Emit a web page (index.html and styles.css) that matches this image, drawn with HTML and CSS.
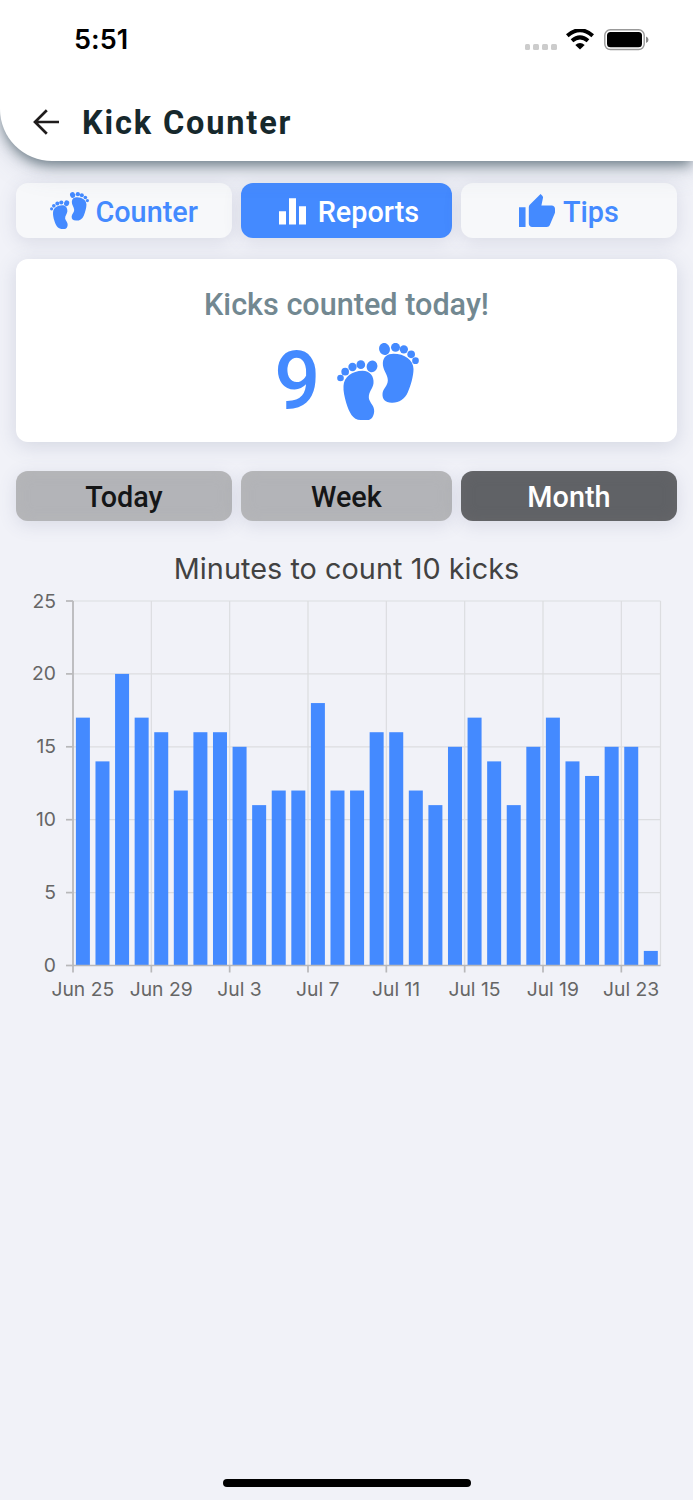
FILE: index.html
```
<!DOCTYPE html>
<html lang="en">
<head>
	<meta charset="UTF-8">
	<title>Kick Counter</title>
	<link rel="stylesheet" href="styles.css">
</head>
<body>
	<!-- shared footprints icon -->
	<svg class="defs" width="0" height="0">
		<symbol id="feet" viewBox="51 39 245 231">
			<path d="M70 168C71 140 96 123 127 122C150 122 162 139 160 160C158 177 145 185 146 204C148 218 164 228 162 245C160 261 153 270 142 270H122C97 270 87 246 78 218C73 201 69 183 70 168Z"/>
			<path d="M188 99C189 80 202 71 220 71C253 71 280 89 280 117C280 138 272 166 263 187C254 208 237 218 217 218C196 219 186 208 187 192C188 175 203 169 203 151C203 132 187 120 188 99Z"/>
			<circle cx="61" cy="144" r="10"/>
			<circle cx="75" cy="125" r="11.500"/>
			<circle cx="97" cy="111" r="12.500"/>
			<circle cx="122" cy="104" r="13"/>
			<ellipse cx="155.500" cy="109" rx="16" ry="18" transform="rotate(18 155.500 109)"/>
			<ellipse cx="193" cy="57" rx="16" ry="18.500" transform="rotate(-18 193 57)"/>
			<circle cx="226" cy="52" r="13.500"/>
			<circle cx="251" cy="58" r="12.500"/>
			<circle cx="273" cy="73" r="11.500"/>
			<circle cx="286" cy="92" r="10"/>
		</symbol>
	</svg>

	<header class="header">
		<div class="status">
			<span class="time">5:51</span>
			<div class="status-icons">
				<div class="dots"><i></i><i></i><i></i><i></i></div>
				<svg class="wifi" width="28" height="21" viewBox="0 0 28 21">
					<path d="M1.300 6.800Q14-4.300 26.700 6.800M6 11.800Q14 5 22 11.800" fill="none" stroke="#000" stroke-width="4"/>
					<path d="M9.300 15.900Q14 12.200 18.700 15.900L14 20.500Z"/>
				</svg>
				<svg class="battery" width="45" height="22" viewBox="0 0 45 22">
					<rect x=".8" y=".8" width="39.400" height="19.700" rx="5.500" fill="none" stroke="#999" stroke-width="1.400"/>
					<rect x="3" y="3" width="35" height="15.300" rx="3.500"/>
					<path d="M42 7.500Q44.500 8.500 44.500 10.700T42 14Z" fill="#888"/>
				</svg>
			</div>
		</div>
		<div class="title-bar">
			<svg class="back" width="27" height="26" viewBox="0 0 27 26">
				<path d="M26 13H2M13.800 1.200L2 13L13.800 24.800" fill="none" stroke="#1f1c1c" stroke-width="2.700"/>
			</svg>
			<h1>Kick Counter</h1>
		</div>
	</header>

	<main>
		<nav class="tabs">
			<a class="tab"><svg class="tab-feet"><use href="#feet"/></svg>Counter</a>
			<a class="tab on">
				<svg class="tab-bars" width="27" height="27" viewBox="0 0 27 27"><path d="M0 13.300H7V26.500H0ZM10 .3H17V26.500H10ZM20 8.300H27V26.500H20Z"/></svg>Reports
			</a>
			<a class="tab">
				<svg class="tab-thumb" width="36" height="33" viewBox="1 1 22 20" preserveAspectRatio="none"><path d="M1 21h4V9H1v12zm22-11c0-1.100-.9-2-2-2h-6.310l.95-4.570.03-.32c0-.41-.17-.79-.44-1.060L14.170 1 7.590 7.590C7.220 7.950 7 8.450 7 9v10c0 1.100.9 2 2 2h9c.83 0 1.540-.5 1.840-1.220l3.020-7.050c.09-.23.14-.47.14-.73v-2z"/></svg>Tips
			</a>
		</nav>

		<section class="card">
			<p class="card-title">Kicks counted today!</p>
			<div class="count">
				<span>9</span>
				<svg class="count-feet"><use href="#feet"/></svg>
			</div>
		</section>

		<nav class="tabs ranges">
			<a class="range">Today</a>
			<a class="range">Week</a>
			<a class="range on">Month</a>
		</nav>

		<h2>Minutes to count 10 kicks</h2>
		<svg id="chart" width="693" height="420" viewBox="0 0 693 420"></svg>
	</main>

	<div class="home-bar"></div>

	<script src="chart.js"></script>
</body>
</html>
```
FILE: styles.css
```
* {
	box-sizing: border-box;
}
body {
	display: flex;
	flex-direction: column;
	height: 1500px;
	margin: 0;
	overflow: hidden;
	background: #f1f2f8;
	font-family: Roboto, sans-serif;
}
svg {
	display: block;
	flex: none;
}
.defs {
	position: absolute;
}

/* header */
.header {
	position: relative;
	height: 160.600px;
	background: #fff;
	border-bottom-left-radius: 52px;
	box-shadow: 0 6px 13px -2px rgba(69,90,100,.75), 0 10px 28px rgba(96,110,140,.18);
}
.status {
	display: flex;
	justify-content: space-between;
	height: 80px;
	padding: 0 44px 0 74px;
}
.time {
	padding-top: 23px;
	font: 600 27px/34px Inter, sans-serif;
	letter-spacing: .1px;
}
.status-icons {
	display: flex;
	padding-top: 29px;
}
.dots {
	display: flex;
	gap: 3px;
	padding-top: 15px;
	margin-right: 9.500px;
}
.dots i {
	width: 5.700px;
	height: 5.500px;
	border-radius: 1.500px;
	background: #ccc;
}
.wifi {
	margin-right: 10px;
}
.title-bar {
	display: flex;
	align-items: center;
	height: 84px;
	padding-left: 32.500px;
}
.back {
	margin-right: 22.500px;
}
h1 {
	margin: 2px 0 0;
	color: #16282c;
	font-size: 32.500px;
	font-weight: 700;
	line-height: 40px;
	letter-spacing: 1.850px;
}

/* tabs */
main {
	flex: 1;
}
.tabs {
	display: grid;
	grid-template-columns: 215.500px 210.500px 215.500px;
	column-gap: 9.500px;
	padding: 22.600px 16.200px 0;
}
.tab,
.range {
	display: flex;
	align-items: center;
	justify-content: center;
	height: 55px;
	border-radius: 12px;
	box-shadow: 0 4px 18px rgba(80,90,125,.15);
	font-size: 28.800px;
	font-weight: 500;
}
.tab {
	padding-top: 3px;
	background: #f7f8fa;
	color: #448aff;
	fill: #448aff;
}
.tab.on {
	padding-left: 5px;
	background: #448aff;
	color: #fff;
	fill: #fff;
}
.tab-feet {
	width: 39px;
	height: 37px;
	margin: 0 6.500px 3px 0;
}
.tab-bars {
	margin: 0 12px 2px 0;
}
.tab-thumb {
	margin: 0 8px 4px 0;
}

/* today card */
.card {
	height: 183px;
	margin: 21px 16.200px 0;
	padding-top: 25.500px;
	border-radius: 12px;
	background: #fff;
	box-shadow: 0 4px 20px rgba(80,90,125,.18);
}
.card-title {
	margin: 0;
	color: #728891;
	font-size: 30.600px;
	font-weight: 500;
	line-height: 40px;
	text-align: center;
}
.count {
	display: flex;
	justify-content: center;
	margin-top: 8.500px;
	color: #448aff;
	fill: #448aff;
}
.count span {
	padding-top: 1px;
	font-size: 81px;
	font-weight: 500;
	line-height: 96px;
}
.count-feet {
	width: 82px;
	height: 77px;
	margin: 10px 0 0 16.500px;
}

/* ranges */
.ranges {
	padding-top: 29px;
}
.range {
	height: 50px;
	padding-top: 2px;
	background: #b3b4b8;
	color: #151617;
	box-shadow: inset 0 0 14px rgba(190,190,185,.35), 0 4px 18px rgba(80,90,125,.15);
}
.range.on {
	background: #606266;
	color: #fff;
	box-shadow: inset 0 0 14px rgba(115,113,113,.35), 0 4px 18px rgba(80,90,125,.15);
}

/* chart */
h2 {
	margin: 27.500px 0 0;
	color: #424242;
	font: 400 28.800px/40px Inter, sans-serif;
	letter-spacing: .05px;
	text-align: center;
}
#chart text {
	fill: #666;
	font: 400 19.300px Inter, sans-serif;
	letter-spacing: 0;
}
.grid {
	stroke: #dcdde0;
	stroke-width: 1.200;
}
.axis {
	stroke: #b8b8ba;
	stroke-width: 1.700;
}
.bar {
	fill: #448aff;
}

.home-bar {
	width: 248px;
	height: 8px;
	margin: 0 auto 13.400px;
	border-radius: 4px;
	background: #000;
}
```
FILE: chart.js
```
var chart = document.getElementById('chart');
var values = [17, 14, 20, 17, 16, 12, 16, 16, 15, 11, 12, 12, 18, 12, 12,
	16, 16, 12, 11, 15, 17, 14, 11, 15, 17, 14, 13, 15, 15, 1];
var days = ['Jun 25', 'Jun 29', 'Jul 3', 'Jul 7', 'Jul 11', 'Jul 15', 'Jul 19', 'Jul 23'];
var left = 73, right = 660.5, top0 = 12, bottom = 376.5;
var step = (right - left) / values.length;
var unit = (bottom - top0) / 25;
var html = '';

function line(cls, x1, y1, x2, y2) {
	html += '<line class="' + cls + '" x1="' + x1 + '" y1="' + y1 + '" x2="' + x2 + '" y2="' + y2 + '"/>';
}
function text(str, x, y, anchor) {
	html += '<text x="' + x + '" y="' + y + '" text-anchor="' + anchor + '">' + str + '</text>';
}

// horizontal grid and y labels
for (var v = 0; v <= 25; v += 5) {
	var y = bottom - v * unit;
	line('grid', left, y, right, y);
	line('axis', left - 7, y, left, y);
	text(v, 56, y + 6.5, 'end');
}

// one tick every four days
for (var i = 0; i < days.length; i++) {
	var x = left + i * 4 * step;
	line('grid', x, top0, x, bottom);
	line('axis', x, bottom, x, bottom + 7);
	text(days[i], x + step / 2, bottom + 30.5, 'middle');
}
line('grid', right, top0, right, bottom);

for (var j = 0; j < values.length; j++) {
	html += '<rect class="bar" x="' + (left + j * step + 2.9) + '" y="' + (bottom - values[j] * unit) +
		'" width="14" height="' + values[j] * unit + '"/>';
}

line('axis', left, top0, left, bottom);
line('axis', left, bottom, right, bottom);

chart.innerHTML = html;
```
